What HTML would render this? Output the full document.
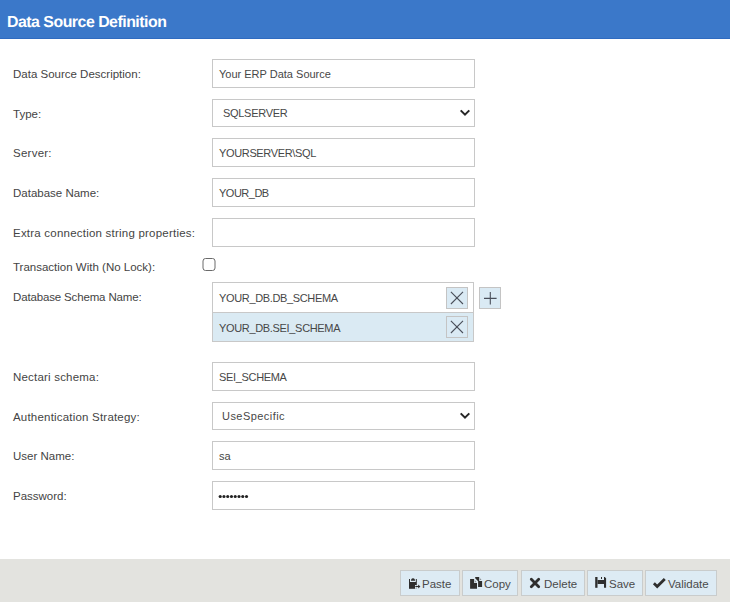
<!DOCTYPE html>
<html><head><meta charset="utf-8">
<style>
html,body{margin:0;padding:0;}
body{width:730px;height:602px;position:relative;overflow:hidden;background:#fff;font-family:"Liberation Sans",sans-serif;color:#333;}
.hdr{position:absolute;left:0;top:0;width:730px;height:38px;background:#3b78c9;border-bottom:1px solid #2f6bc0;}
.hdr span{position:absolute;left:7px;top:13.5px;font-weight:bold;font-size:15.9px;line-height:17px;color:#fff;letter-spacing:-0.5px;white-space:nowrap;text-rendering:geometricPrecision;}
.lbl{position:absolute;left:13px;font-size:11.5px;line-height:13px;color:#444;white-space:nowrap;}
.inp{position:absolute;left:212px;width:261px;height:27px;border:1px solid #c8c8c8;background:#fff;}
.inp span{position:absolute;left:6px;top:8px;font-size:11px;line-height:13px;color:#474747;white-space:nowrap;}
.sel{height:26px;}
.sel span{left:10px;top:7px;}
.chev{position:absolute;left:246px;top:9px;}
.list{position:absolute;left:212px;top:282px;width:260px;height:58px;border:1px solid #c8c8c8;}
.row{position:absolute;left:0;width:260px;}
.row span{position:absolute;left:6px;font-size:11px;line-height:13px;color:#474747;white-space:nowrap;}
.xb{position:absolute;width:20px;height:20px;border:1px solid #c4c4c4;background:#daeaf4;}
.cb{position:absolute;left:202.5px;top:258px;width:11px;height:11px;border:1px solid #707070;border-radius:3px;background:#fff;}
.ftr{position:absolute;left:0;top:559px;width:730px;height:43px;background:#e3e3df;}
.btn{position:absolute;top:570px;height:24px;border:1px solid #c9cccc;background:#ddebf4;box-sizing:border-box;height:26px;}
.btn span{position:absolute;top:7px;font-size:11.5px;line-height:13px;color:#4a4a4a;white-space:nowrap;}
.btn svg{position:absolute;}
</style></head><body>
<div class="hdr"><span>Data Source Definition</span></div>

<div class="lbl" style="top:68px">Data Source Description:</div>
<div class="inp" style="top:59px"><span>Your ERP Data Source</span></div>

<div class="lbl" style="top:108px">Type:</div>
<div class="inp sel" style="top:99px"><span style="letter-spacing:-0.3px">SQLSERVER</span>
<svg class="chev" width="12" height="8" viewBox="0 0 12 8"><path d="M1.7 1.4 L6 5.7 L10.3 1.4" fill="none" stroke="#262626" stroke-width="2"/></svg></div>

<div class="lbl" style="top:147px;letter-spacing:0.25px">Server:</div>
<div class="inp" style="top:138px"><span style="letter-spacing:-0.35px">YOURSERVER\SQL</span></div>

<div class="lbl" style="top:187px">Database Name:</div>
<div class="inp" style="top:178px"><span style="letter-spacing:-0.5px">YOUR_DB</span></div>

<div class="lbl" style="top:227px;letter-spacing:0.22px">Extra connection string properties:</div>
<div class="inp" style="top:218px"></div>

<div class="lbl" style="top:261px;letter-spacing:0px">Transaction With (No Lock):</div>
<svg width="730" height="300" style="position:absolute;left:0;top:0"><rect x="203" y="258.5" width="12" height="12" rx="2.5" ry="2.5" fill="#fff" stroke="#6a6a6a" stroke-width="1"/></svg>

<div class="lbl" style="top:291px;letter-spacing:-0.15px">Database Schema Name:</div>
<div class="list">
  <div class="row" style="top:0;height:29px;background:#fff;border-bottom:1px solid #c8c8c8;"><span style="top:9px;letter-spacing:-0.35px">YOUR_DB.DB_SCHEMA</span>
    <div class="xb" style="left:233px;top:4px"><svg width="20" height="20" viewBox="0 0 20 20" style="position:absolute;left:0;top:0"><path d="M3.9 3.9 L16 16 M16 3.9 L3.9 16" stroke="#4a4f5a" stroke-width="1.1" fill="none"/></svg></div>
  </div>
  <div class="row" style="top:30px;height:28px;background:#daeaf3;"><span style="top:9px;letter-spacing:-0.33px">YOUR_DB.SEI_SCHEMA</span>
    <div class="xb" style="left:233px;top:3px"><svg width="20" height="20" viewBox="0 0 20 20" style="position:absolute;left:0;top:0"><path d="M3.9 3.9 L16 16 M16 3.9 L3.9 16" stroke="#4a4f5a" stroke-width="1.1" fill="none"/></svg></div>
  </div>
</div>
<div class="xb" style="left:479px;top:287px"><svg width="20" height="20" viewBox="0 0 20 20" style="position:absolute;left:0;top:0"><path d="M4 10.4 H16.6 M10.3 3.9 V16.6" stroke="#4a4f5a" stroke-width="1.1" fill="none"/></svg></div>

<div class="lbl" style="top:371px;letter-spacing:0.2px">Nectari schema:</div>
<div class="inp" style="top:362px"><span style="letter-spacing:-0.33px">SEI_SCHEMA</span></div>

<div class="lbl" style="top:411px;letter-spacing:0.2px">Authentication Strategy:</div>
<div class="inp sel" style="top:402px"><span style="letter-spacing:0.45px;left:9px">UseSpecific</span>
<svg class="chev" width="12" height="8" viewBox="0 0 12 8"><path d="M1.7 1.4 L6 5.7 L10.3 1.4" fill="none" stroke="#262626" stroke-width="2"/></svg></div>

<div class="lbl" style="top:450px">User Name:</div>
<div class="inp" style="top:441px"><span>sa</span></div>

<div class="lbl" style="top:490px">Password:</div>
<div class="inp" style="top:481px"><svg width="60" height="27" style="position:absolute;left:0;top:0" fill="#222"><circle cx="7.20" cy="14.5" r="1.55"/><circle cx="10.96" cy="14.5" r="1.55"/><circle cx="14.72" cy="14.5" r="1.55"/><circle cx="18.48" cy="14.5" r="1.55"/><circle cx="22.24" cy="14.5" r="1.55"/><circle cx="26.00" cy="14.5" r="1.55"/><circle cx="29.76" cy="14.5" r="1.55"/><circle cx="33.52" cy="14.5" r="1.55"/></svg></div>

<div class="ftr"></div>
<div class="btn" style="left:400px;width:60px"><span style="left:21px">Paste</span></div>
<div class="btn" style="left:462px;width:56px"><span style="left:21px">Copy</span></div>
<div class="btn" style="left:521px;width:64px"><span style="left:22px">Delete</span></div>
<div class="btn" style="left:587px;width:56px"><span style="left:21px">Save</span></div>
<div class="btn" style="left:645px;width:72px"><span style="left:22px">Validate</span></div>
<svg width="730" height="602" style="position:absolute;left:0;top:0;pointer-events:none">
<g fill="#2e2e2e">
<rect x="409" y="579" width="7.8" height="9.8"/>
<rect x="410" y="579" width="5.8" height="3" fill="#ddebf4"/>
<path d="M411 580.8 V579.5 Q413 577 415 579.5 V580.8 Z"/>
<rect x="415" y="585" width="1.8" height="3.8" fill="#ddebf4"/>
<path d="M415.3 586.5 H419" stroke="#2e2e2e" stroke-width="1.1"/>
<path d="M418.2 584.6 L420.4 586.5 L418.2 588.4 Z"/>
<path d="M475.2 577 H479.2 V580.9 H482.1 V587 H478.1 V581.2 L475.2 578.3 Z"/>
<path d="M479.9 577.9 L481.5 580 H479.9 Z" fill="#8a8d90"/>
<path d="M470.1 579 H474.1 V583 H477 V588.8 H470.1 Z"/>
<path d="M474.8 580 L476.5 582.2 H474.8 Z" fill="#8a8d90"/>
<path d="M531.3 579.3 L538.7 586.7 M538.7 579.3 L531.3 586.7" stroke="#2e2e2e" stroke-width="2.8" stroke-linecap="round"/>
<rect x="595.2" y="577" width="2.3" height="10.8"/>
<path d="M604 577 H604.8 L606.1 578.3 V587.8 H604 Z"/>
<rect x="597.5" y="580" width="6.5" height="4"/>
<rect x="601" y="577" width="1" height="2"/>
<path d="M653.9 583.3 L657.2 586.5 L664.8 579" stroke="#2e2e2e" stroke-width="2.8" fill="none"/>
</g></svg>
</body></html>
